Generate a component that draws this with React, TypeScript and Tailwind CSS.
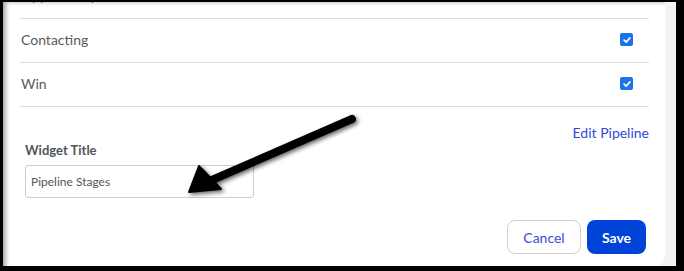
import React from 'react';

const stages = [
  { name: 'Opportunity', checked: true },
  { name: 'Contacting', checked: true },
  { name: 'Win', checked: true },
];

function CheckBox() {
  return (
    <span className="flex h-[13px] w-[13px] items-center justify-center rounded-[2px] bg-[#1a73e8]">
      <svg viewBox="0 0 12 12" className="h-[10px] w-[10px]">
        <path d="M2.5 6.2 L5 8.6 L9.5 3.4" fill="none" stroke="white" strokeWidth="2" strokeLinecap="round" strokeLinejoin="round" />
      </svg>
    </span>
  );
}

export default function App() {
  return (
    <div className="relative h-[271px] w-[684px] overflow-hidden bg-black pb-[5px] pl-[3px] pr-[8px] pt-[2px] font-['Lato','Open_Sans',sans-serif]">
      <div className="h-full bg-[#f3f3f3]">
        <div className="h-full w-[662px] overflow-hidden rounded-br-[10px] bg-white pl-[17px] pr-[16px] shadow-[inset_5px_2px_4px_-2px_rgba(0,0,0,0.35)]">
          {/* stage list, first row scrolled off the top */}
          <div className="mt-[-27px]">
            {stages.map((s) => (
              <div key={s.name} className="flex h-[44px] items-center justify-between border-b border-[#dcdcdc] pb-[2px] pl-[1px] pr-[16px]">
                <span className="text-[14px] text-[#5a5a5a]">{s.name}</span>
                {s.checked && <CheckBox />}
              </div>
            ))}
          </div>

          <div className="flex justify-end pt-[17px]">
            <a className="text-[14px] leading-[18px] text-[#2f4ad6]">Edit Pipeline</a>
          </div>

          <div className="pl-[5px]">
            <label className="block text-[13px] font-bold leading-[16px] text-[#555]">Widget Title</label>
            <input
              readOnly
              value="Pipeline Stages"
              className="mt-[7px] h-[33px] w-[229px] rounded-[3px] border border-[#cfcfcf] px-[5px] text-[12px] text-[#555] outline-none"
            />
          </div>

          <div className="flex justify-end gap-[6px] pr-[3px] pt-[22px]">
            <button className="h-[34px] w-[74px] rounded-[8px] border border-[#cfcfcf] bg-white text-[14px] text-[#3d49d8]">Cancel</button>
            <button className="h-[34px] w-[59px] rounded-[8px] bg-[#0043d9] text-[14px] font-bold text-white">Save</button>
          </div>
        </div>
      </div>

      {/* annotation arrow */}
      <svg className="pointer-events-none absolute left-0 top-0" width="684" height="271">
        <defs>
          <filter id="sh" x="-20%" y="-20%" width="140%" height="140%">
            <feGaussianBlur in="SourceAlpha" stdDeviation="2" />
            <feOffset dx="2" dy="2" />
            <feComponentTransfer>
              <feFuncA type="linear" slope="0.6" />
            </feComponentTransfer>
            <feMerge>
              <feMergeNode />
              <feMergeNode in="SourceGraphic" />
            </feMerge>
          </filter>
        </defs>
        <g filter="url(#sh)">
          <line x1="352" y1="119" x2="212" y2="180" stroke="black" strokeWidth="8" strokeLinecap="round" />
          <path d="M189 192 L199 166 L221 189 Z" fill="black" stroke="black" strokeWidth="2" strokeLinejoin="round" />
        </g>
      </svg>
    </div>
  );
}
